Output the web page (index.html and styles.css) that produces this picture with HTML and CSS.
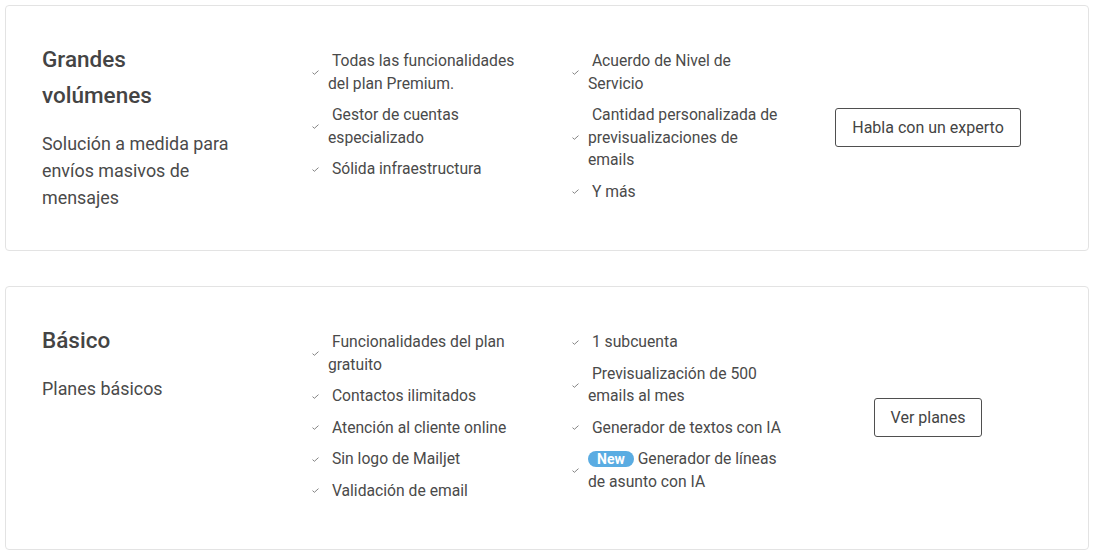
FILE: index.html
```html
<!DOCTYPE html>
<html lang="es">
<head>
<meta charset="utf-8">
<title>Planes</title>
<link rel="stylesheet" href="styles.css">
</head>
<body>
<div class="plans">
  <section class="card">
    <div class="intro">
      <h2 class="title">Grandes volúmenes</h2>
      <p class="desc">Solución a medida para envíos masivos de mensajes</p>
    </div>
    <ul class="features">
      <li><svg class="check" viewBox="0 0 7 5"><path d="M0.5 2.6 L2.4 4.3 L6.5 0.6"/></svg><span>&nbsp;Todas las funcionalidades del plan Premium.</span></li>
      <li><svg class="check" viewBox="0 0 7 5"><path d="M0.5 2.6 L2.4 4.3 L6.5 0.6"/></svg><span>&nbsp;Gestor de cuentas especializado</span></li>
      <li><svg class="check" viewBox="0 0 7 5"><path d="M0.5 2.6 L2.4 4.3 L6.5 0.6"/></svg><span>&nbsp;Sólida infraestructura</span></li>
    </ul>
    <ul class="features">
      <li><svg class="check" viewBox="0 0 7 5"><path d="M0.5 2.6 L2.4 4.3 L6.5 0.6"/></svg><span>&nbsp;Acuerdo de Nivel de Servicio</span></li>
      <li><svg class="check" viewBox="0 0 7 5"><path d="M0.5 2.6 L2.4 4.3 L6.5 0.6"/></svg><span>&nbsp;Cantidad personalizada de previsualizaciones de emails</span></li>
      <li><svg class="check" viewBox="0 0 7 5"><path d="M0.5 2.6 L2.4 4.3 L6.5 0.6"/></svg><span>&nbsp;Y más</span></li>
    </ul>
    <div class="action"><a class="btn" href="#">Habla con un experto</a></div>
  </section>

  <section class="card">
    <div class="intro">
      <h2 class="title">Básico</h2>
      <p class="desc">Planes básicos</p>
    </div>
    <ul class="features">
      <li><svg class="check" viewBox="0 0 7 5"><path d="M0.5 2.6 L2.4 4.3 L6.5 0.6"/></svg><span>&nbsp;Funcionalidades del plan gratuito</span></li>
      <li><svg class="check" viewBox="0 0 7 5"><path d="M0.5 2.6 L2.4 4.3 L6.5 0.6"/></svg><span>&nbsp;Contactos ilimitados</span></li>
      <li><svg class="check" viewBox="0 0 7 5"><path d="M0.5 2.6 L2.4 4.3 L6.5 0.6"/></svg><span>&nbsp;Atención al cliente online</span></li>
      <li><svg class="check" viewBox="0 0 7 5"><path d="M0.5 2.6 L2.4 4.3 L6.5 0.6"/></svg><span>&nbsp;Sin logo de Mailjet</span></li>
      <li><svg class="check" viewBox="0 0 7 5"><path d="M0.5 2.6 L2.4 4.3 L6.5 0.6"/></svg><span>&nbsp;Validación de email</span></li>
    </ul>
    <ul class="features">
      <li><svg class="check" viewBox="0 0 7 5"><path d="M0.5 2.6 L2.4 4.3 L6.5 0.6"/></svg><span>&nbsp;1 subcuenta</span></li>
      <li><svg class="check" viewBox="0 0 7 5"><path d="M0.5 2.6 L2.4 4.3 L6.5 0.6"/></svg><span>&nbsp;Previsualización de 500 emails al mes</span></li>
      <li><svg class="check" viewBox="0 0 7 5"><path d="M0.5 2.6 L2.4 4.3 L6.5 0.6"/></svg><span>&nbsp;Generador de textos con IA</span></li>
      <li><svg class="check" viewBox="0 0 7 5"><path d="M0.5 2.6 L2.4 4.3 L6.5 0.6"/></svg><span><span class="badge">New</span> Generador de líneas de asunto con IA</span></li>
    </ul>
    <div class="action"><a class="btn" href="#">Ver planes</a></div>
  </section>
</div>
</body>
</html>
```

FILE: styles.css
```css
html, body {
  background: #ffffff;
}

body {
  margin: 5px 6px 0 5px;
  font-family: Roboto, "Liberation Sans", Arial, sans-serif;
  color: #4a4a4a;
}

.plans {
  display: flex;
  flex-direction: column;
  gap: 35px;
}

.card {
  display: grid;
  grid-template-columns: 270px 260px 260px 192px;
  align-items: start;
  border: 1px solid #e3e3e3;
  border-radius: 4px;
  padding: 36px 36px 38px;
}

.intro {
  max-width: 194px;
}

.title {
  margin: -1px 0 17px;
  font-size: 22.5px;
  line-height: 36px;
  font-weight: 500;
  color: #444444;
}

.desc {
  margin: 0;
  font-size: 17.9px;
  line-height: 27px;
  color: #4a4a4a;
}

.features {
  list-style: none;
  margin: 8px 0 0;
  padding: 0;
  font-size: 15.7px;
  line-height: 22.5px;
  color: #4a4a4a;
}

.features li {
  display: flex;
  align-items: center;
  margin-bottom: 9px;
}

.features li span {
  max-width: 198px;
}

.check {
  flex: none;
  width: 7px;
  height: 5px;
  margin-right: 9px;
  fill: none;
  stroke: #777;
  stroke-width: 0.9;
}

.features li .badge {
  display: inline-block;
  background: #5aace2;
  color: #ffffff;
  font-size: 14px;
  font-weight: 700;
  line-height: 16px;
  padding: 0 9px;
  border-radius: 8px;
  vertical-align: 0;
}

.action {
  align-self: center;
  display: flex;
  justify-content: center;
}

.btn {
  display: inline-block;
  border: 1px solid #4f4f4f;
  border-radius: 3px;
  padding: 9px 16px 8px;
  font-size: 16px;
  line-height: 20px;
  color: #444444;
  text-decoration: none;
}
```
